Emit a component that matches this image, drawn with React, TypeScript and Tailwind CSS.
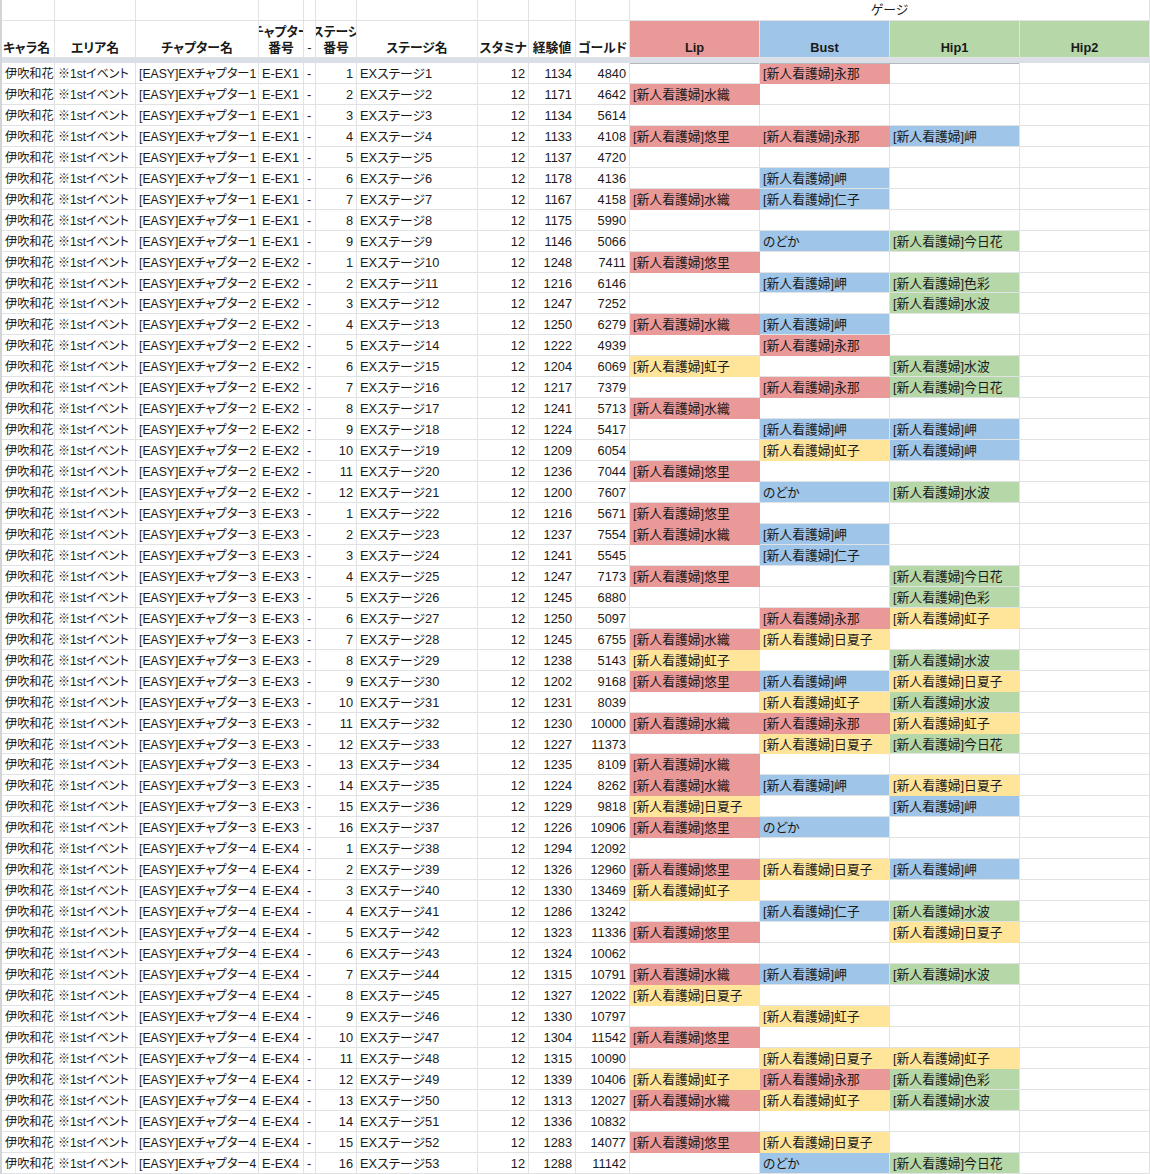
const cols = "grid grid-cols-[53px_81px_123px_45px_12px_41px_121px_51px_47px_54px_130px_130px_130px_130px]";
const line = "border-r border-b border-[#e1e2e3]";

// 看護婦の名前ごとのセル色
const fills: Record<string, string> = {
  永那: "bg-[#ea9999] border-[#ea9999]",
  水織: "bg-[#ea9999] border-[#ea9999]",
  悠里: "bg-[#ea9999] border-[#ea9999]",
  岬: "bg-[#9fc5e8] border-[#9fc5e8]",
  仁子: "bg-[#9fc5e8] border-[#9fc5e8]",
  のどか: "bg-[#9fc5e8] border-[#9fc5e8]",
  虹子: "bg-[#ffe599] border-[#ffe599]",
  日夏子: "bg-[#ffe599] border-[#ffe599]",
  今日花: "bg-[#b6d7a8] border-[#b6d7a8]",
  色彩: "bg-[#b6d7a8] border-[#b6d7a8]",
  水波: "bg-[#b6d7a8] border-[#b6d7a8]",
};

// 経験値, ゴールド, Lip, Bust, Hip1
const stages: [number, number, string, string, string][] = [
  [1134, 4840, "", "永那", ""],
  [1171, 4642, "水織", "", ""],
  [1134, 5614, "", "", ""],
  [1133, 4108, "悠里", "永那", "岬"],
  [1137, 4720, "", "", ""],
  [1178, 4136, "", "岬", ""],
  [1167, 4158, "水織", "仁子", ""],
  [1175, 5990, "", "", ""],
  [1146, 5066, "", "のどか", "今日花"],
  [1248, 7411, "悠里", "", ""],
  [1216, 6146, "", "岬", "色彩"],
  [1247, 7252, "", "", "水波"],
  [1250, 6279, "水織", "岬", ""],
  [1222, 4939, "", "永那", ""],
  [1204, 6069, "虹子", "", "水波"],
  [1217, 7379, "", "永那", "今日花"],
  [1241, 5713, "水織", "", ""],
  [1224, 5417, "", "岬", "岬"],
  [1209, 6054, "", "虹子", "岬"],
  [1236, 7044, "悠里", "", ""],
  [1200, 7607, "", "のどか", "水波"],
  [1216, 5671, "悠里", "", ""],
  [1237, 7554, "水織", "岬", ""],
  [1241, 5545, "", "仁子", ""],
  [1247, 7173, "悠里", "", "今日花"],
  [1245, 6880, "", "", "色彩"],
  [1250, 5097, "", "永那", "虹子"],
  [1245, 6755, "水織", "日夏子", ""],
  [1238, 5143, "虹子", "", "水波"],
  [1202, 9168, "悠里", "岬", "日夏子"],
  [1231, 8039, "", "虹子", "水波"],
  [1230, 10000, "水織", "永那", "虹子"],
  [1227, 11373, "", "日夏子", "今日花"],
  [1235, 8109, "水織", "", ""],
  [1224, 8262, "水織", "岬", "日夏子"],
  [1229, 9818, "日夏子", "", "岬"],
  [1226, 10906, "悠里", "のどか", ""],
  [1294, 12092, "", "", ""],
  [1326, 12960, "悠里", "日夏子", "岬"],
  [1330, 13469, "虹子", "", ""],
  [1286, 13242, "", "仁子", "水波"],
  [1323, 11336, "悠里", "", "日夏子"],
  [1324, 10062, "", "", ""],
  [1315, 10791, "水織", "岬", "水波"],
  [1327, 12022, "日夏子", "", ""],
  [1330, 10797, "", "虹子", ""],
  [1304, 11542, "悠里", "", ""],
  [1315, 10090, "", "日夏子", "虹子"],
  [1339, 10406, "虹子", "永那", "色彩"],
  [1313, 12027, "水織", "虹子", "水波"],
  [1336, 10832, "", "", ""],
  [1283, 14077, "悠里", "日夏子", ""],
  [1288, 11142, "", "のどか", "今日花"],
];

function chapterOf(stage: number) {
  if (stage <= 9) return { ch: 1, no: stage };
  if (stage <= 21) return { ch: 2, no: stage - 9 };
  if (stage <= 37) return { ch: 3, no: stage - 21 };
  return { ch: 4, no: stage - 37 };
}

function Cell({ children, right, className = "" }: { children?: React.ReactNode; right?: boolean; className?: string }) {
  return (
    <div className={`${line} overflow-hidden whitespace-nowrap leading-[18px] pt-[2px] ${right ? "text-right pr-[3px]" : "pl-[3px]"} ${className}`}>
      {children}
    </div>
  );
}

function Gauge({ name, first }: { name: string; first: boolean }) {
  const fill = name ? fills[name] : "";
  const label = name === "のどか" ? "のどか" : name ? `[新人看護婦]${name}` : "";
  return (
    <div className={`${line} ${fill} ${first ? "shadow-[inset_0_1px_0_#b4b9bc]" : ""} overflow-hidden whitespace-nowrap leading-[18px] pt-[2px] pl-[3px]`}>
      {label}
    </div>
  );
}

function HeadCell({ children, className = "" }: { children?: React.ReactNode; className?: string }) {
  return (
    <div className={`${line} flex flex-col justify-end items-center overflow-hidden whitespace-nowrap font-bold leading-[16px] pb-[1px] ${className}`}>
      {children}
    </div>
  );
}

export default function App() {
  return (
    <div className="w-[1150px] h-[1174px] overflow-hidden bg-white border-l-2 border-[#d3d4d5] text-[12.8px] text-[#1a1a1a] [font-feature-settings:'palt'] font-['Liberation_Sans','Noto_Sans_CJK_JP',sans-serif]">
      {/* 1行目 */}
      <div className={`${cols} h-[21px]`}>
        <Cell /><Cell /><Cell /><Cell /><Cell /><Cell /><Cell /><Cell /><Cell /><Cell />
        <div className={`${line} col-span-4 text-center leading-[20px]`}>ゲージ</div>
      </div>

      {/* ヘッダー */}
      <div className={`${cols} h-[37px]`}>
        <HeadCell className="items-start! pl-[1px]">キャラ名</HeadCell>
        <HeadCell>エリア名</HeadCell>
        <HeadCell>チャプター名</HeadCell>
        <HeadCell><span>チャプター</span><span>番号</span></HeadCell>
        <HeadCell className="font-normal">-</HeadCell>
        <HeadCell><span>ステージ</span><span>番号</span></HeadCell>
        <HeadCell>ステージ名</HeadCell>
        <HeadCell>スタミナ</HeadCell>
        <HeadCell>経験値</HeadCell>
        <HeadCell>ゴールド</HeadCell>
        <HeadCell className="bg-[#ea9999] border-[#d98c8c]">Lip</HeadCell>
        <HeadCell className="bg-[#9fc5e8] border-[#93b8da]">Bust</HeadCell>
        <HeadCell className="bg-[#b6d7a8] border-[#a6c898]">Hip1</HeadCell>
        <HeadCell className="bg-[#b6d7a8] border-[#a6c898]">Hip2</HeadCell>
      </div>

      <div className="h-[5px] bg-[#dbe0e8]" />

      {/* データ行 */}
      {stages.map(([exp, gold, lip, bust, hip], i) => {
        const stage = i + 1;
        const { ch, no } = chapterOf(stage);
        return (
          <div key={stage} className={`${cols} h-[20.96px]`}>
            <Cell className="text-[12.2px]">伊吹和花</Cell>
            <Cell className="text-[12px]">※1stイベント</Cell>
            <Cell className="text-[12.2px]">[EASY]EXチャプター{ch}</Cell>
            <Cell>E-EX{ch}</Cell>
            <Cell>-</Cell>
            <Cell right>{no}</Cell>
            <Cell>EXステージ{stage}</Cell>
            <Cell right>12</Cell>
            <Cell right>{exp}</Cell>
            <Cell right>{gold}</Cell>
            <Gauge name={lip} first={i === 0} />
            <Gauge name={bust} first={i === 0} />
            <Gauge name={hip} first={i === 0} />
            <Gauge name="" first={false} />
          </div>
        );
      })}
    </div>
  );
}
